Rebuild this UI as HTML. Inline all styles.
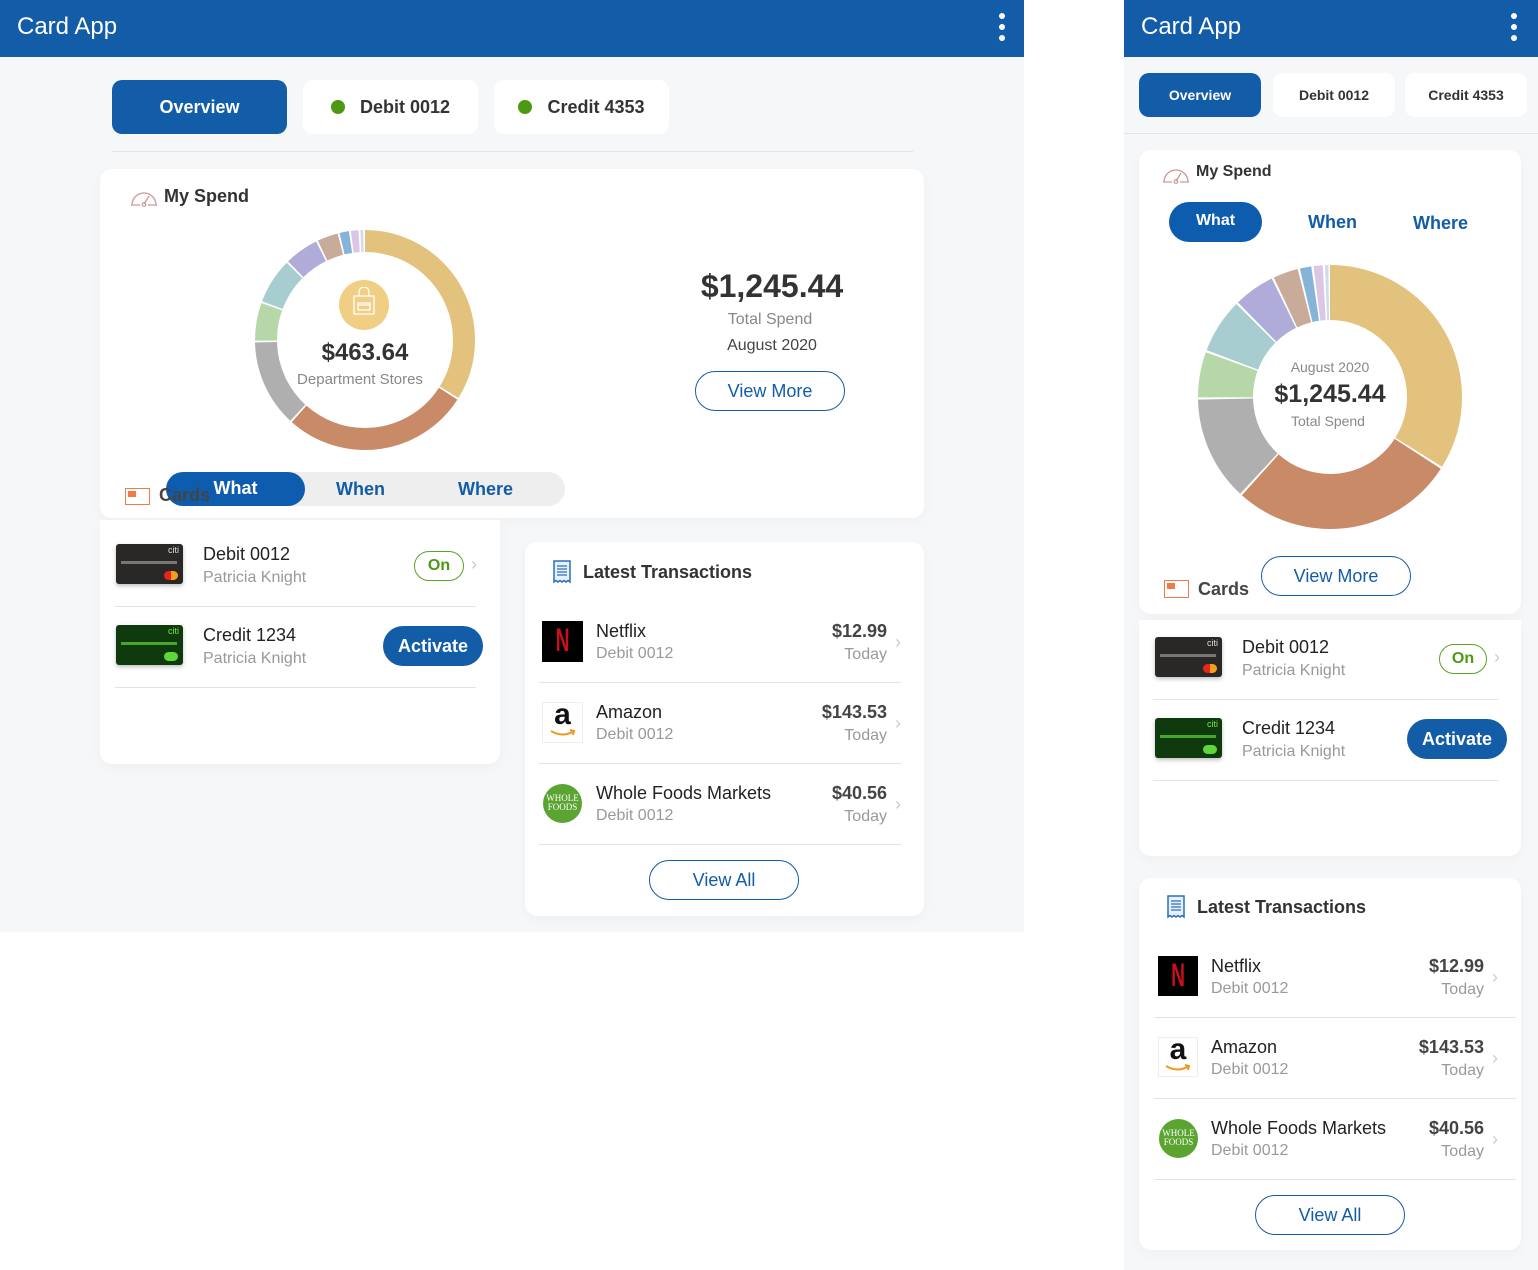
<!DOCTYPE html>
<html><head><meta charset="utf-8"><style>
*{box-sizing:border-box;margin:0;padding:0}
body{width:1538px;height:1270px;position:relative;background:#fff;font-family:"Liberation Sans",Arial,sans-serif;overflow:hidden;color:#222}
.a{position:absolute}
.hdr{background:#125ca8;height:57px;color:#fff}
.hdr .t{position:absolute;left:17px;top:13px;font-size:24px}
.dots{position:absolute;top:13px;width:6px}
.dots i{display:block;width:6px;height:6px;border-radius:50%;background:#fff;margin-bottom:5px}
.card{background:#fff;border-radius:12px;box-shadow:0 4px 12px rgba(0,0,0,.03)}
.tab{background:#fff;border-radius:10px;font-weight:bold;color:#333;display:flex;align-items:center;justify-content:center}
.tab.on{background:#125ca8;color:#fff}
.gd{width:14px;height:14px;border-radius:50%;background:#4c9a13;margin-right:15px}
.btn{border:1.5px solid #125ca8;border-radius:22px;color:#125ca8;font-size:18px;display:flex;align-items:center;justify-content:center;background:#fff}
.bl{color:#125ca8;font-weight:bold;font-size:18px}
.cc{width:67px;height:40px;border-radius:3px;box-shadow:0 2px 4px rgba(0,0,0,.25);background:#2a2827;overflow:hidden}
.cc.g{background:#0f3a0d}
.cc b{position:absolute;right:4px;top:1px;color:#ddd;font-size:9px;font-weight:normal}
.cc.g b{color:#7be34b}
.cc s{position:absolute;left:5px;top:17px;width:56px;height:3px;background:#999;opacity:.7}
.cc.g s{background:#5fd63a}
.cc u{position:absolute;right:5px;bottom:4px;width:14px;height:9px;border-radius:5px;background:linear-gradient(90deg,#e8241c 50%,#f59e1a 50%)}
.cc.g u{background:#5fd63a}
.nm{font-size:18px;color:#222}
.sub{font-size:16px;color:#999}
.onp{border:1.5px solid #5aa321;border-radius:16px;color:#4c9a13;font-weight:bold;font-size:16px;display:flex;align-items:center;justify-content:center}
.act{background:#125ca8;border-radius:20px;color:#fff;font-size:18px;font-weight:bold;display:flex;align-items:center;justify-content:center}
.chev{color:#ccc;font-size:18px}
.line{height:1px;background:#e3e3e3}
.amt{font-size:18px;font-weight:bold;color:#444;text-align:right}
.day{font-size:16px;color:#999;text-align:right}
.h{font-size:18px;font-weight:bold;color:#333}
.nf{font-family:"Liberation Sans Narrow","Liberation Sans",sans-serif;transform:scaleX(.6)}
</style></head><body>

<!-- LEFT PANEL -->
<div class="a" style="left:0;top:0;width:1024px;height:932px;background:#f6f7f9"></div>
<div class="a hdr" style="left:0;top:0;width:1024px"><span class="t">Card App</span><div class="dots" style="left:999px"><i></i><i></i><i></i></div></div>

<div class="a tab on" style="left:112px;top:80px;width:175px;height:54px;font-size:18px">Overview</div>
<div class="a tab" style="left:303px;top:80px;width:175px;height:54px;font-size:18px"><span class="gd"></span>Debit 0012</div>
<div class="a tab" style="left:494px;top:80px;width:175px;height:54px;font-size:18px"><span class="gd"></span>Credit 4353</div>
<div class="a line" style="left:112px;top:151px;width:801px"></div>

<div class="a card" style="left:100px;top:169px;width:824px;height:349px"></div>
<svg class="a" style="left:130px;top:186px" width="28" height="22" viewBox="0 0 28 22"><path d="M2 19 A12 12 0 0 1 26 19 M1 19h9 M18 19h9 M14 18 L19 10" fill="none" stroke="#c99" stroke-width="1.3"/><circle cx="14" cy="18.5" r="1.8" fill="none" stroke="#c99" stroke-width="1.2"/></svg>
<div class="a h" style="left:164px;top:186px">My Spend</div>

<svg class="a" style="left:255px;top:230px" width="220" height="220" viewBox="0 0 220 220">
<g transform="rotate(-90 110 110)" fill="none" stroke-width="22">
<circle cx="110" cy="110" r="99" pathLength="360" stroke="#e2c27d" stroke-dasharray="122 360" stroke-dashoffset="0"/>
<circle cx="110" cy="110" r="99" pathLength="360" stroke="#c98a68" stroke-dasharray="99 360" stroke-dashoffset="-123"/>
<circle cx="110" cy="110" r="99" pathLength="360" stroke="#afafaf" stroke-dasharray="46 360" stroke-dashoffset="-223"/>
<circle cx="110" cy="110" r="99" pathLength="360" stroke="#b6d8a8" stroke-dasharray="20 360" stroke-dashoffset="-270"/>
<circle cx="110" cy="110" r="99" pathLength="360" stroke="#a7cdd0" stroke-dasharray="24 360" stroke-dashoffset="-291"/>
<circle cx="110" cy="110" r="99" pathLength="360" stroke="#afacda" stroke-dasharray="18 360" stroke-dashoffset="-316"/>
<circle cx="110" cy="110" r="99" pathLength="360" stroke="#c8ab99" stroke-dasharray="11 360" stroke-dashoffset="-335"/>
<circle cx="110" cy="110" r="99" pathLength="360" stroke="#85b4d8" stroke-dasharray="5 360" stroke-dashoffset="-347"/>
<circle cx="110" cy="110" r="99" pathLength="360" stroke="#dcc6e6" stroke-dasharray="4 360" stroke-dashoffset="-353"/>
<circle cx="110" cy="110" r="99" pathLength="360" stroke="#cfdcef" stroke-dasharray="1.5 360" stroke-dashoffset="-358"/>
</g></svg>
<div class="a" style="left:339px;top:280px;width:50px;height:50px;border-radius:50%;background:#f0cf84"></div>
<svg class="a" style="left:351px;top:287px" width="26" height="30" viewBox="0 0 26 30"><path d="M3 9h20v18H3z M8 9V5a5 5 0 0 1 10 0v4 M7 16h12v7H7z M7 18h12" fill="none" stroke="#fff" stroke-width="1.3"/></svg>
<div class="a" style="left:260px;top:339px;width:210px;text-align:center;font-size:24px;font-weight:bold;color:#333">$463.64</div>
<div class="a" style="left:260px;top:371px;width:200px;text-align:center;font-size:15px;color:#888">Department Stores</div>

<div class="a" style="left:672px;top:268px;width:200px;text-align:center;font-size:32px;font-weight:bold;color:#333">$1,245.44</div>
<div class="a" style="left:670px;top:311px;width:200px;text-align:center;font-size:16px;color:#888">Total Spend</div>
<div class="a" style="left:672px;top:337px;width:200px;text-align:center;font-size:16px;color:#444">August 2020</div>
<div class="a btn" style="left:695px;top:371px;width:150px;height:40px">View More</div>

<div class="a" style="left:125px;top:488px;width:25px;height:17px;border:1px solid #f07a4a"></div>
<div class="a" style="left:128px;top:491px;width:8px;height:6px;background:#f07a4a"></div>
<div class="a" style="left:166px;top:472px;width:399px;height:34px;border-radius:17px;background:#eeeeee"></div>
<div class="a" style="left:166px;top:472px;width:139px;height:34px;border-radius:17px;background:#0d5cad"></div>
<div class="a" style="left:166px;top:478px;width:139px;text-align:center;font-size:18px;font-weight:bold;color:#fff">What</div>
<div class="a" style="left:159px;top:485px;font-size:18px;font-weight:bold;color:#444">Cards</div>
<div class="a bl" style="left:336px;top:479px">When</div>
<div class="a bl" style="left:458px;top:479px">Where</div>

<div class="a card" style="left:100px;top:520px;width:400px;height:244px;border-radius:0 0 12px 12px"></div>
<div class="a cc" style="left:116px;top:544px"><b>citi</b><s></s><u></u></div>
<div class="a nm" style="left:203px;top:544px">Debit 0012</div>
<div class="a sub" style="left:203px;top:569px">Patricia Knight</div>
<div class="a onp" style="left:414px;top:551px;width:50px;height:30px">On</div>
<div class="a chev" style="left:471px;top:554px">›</div>
<div class="a line" style="left:115px;top:606px;width:361px"></div>
<div class="a cc g" style="left:116px;top:625px"><b>citi</b><s></s><u></u></div>
<div class="a nm" style="left:203px;top:625px">Credit 1234</div>
<div class="a sub" style="left:203px;top:650px">Patricia Knight</div>
<div class="a act" style="left:383px;top:626px;width:100px;height:40px">Activate</div>
<div class="a line" style="left:115px;top:687px;width:361px"></div>

<div class="a card" style="left:525px;top:542px;width:399px;height:374px"></div>
<svg class="a" style="left:553px;top:560px" width="18" height="24" viewBox="0 0 18 24"><path d="M1 1h16v21l-2-1.5-2 1.5-2-1.5-2 1.5-2-1.5-2 1.5-2-1.5-2 1.5z" fill="#e8f0fa" stroke="#2a6fc0" stroke-width="1.5"/><path d="M4 6h10M4 9h10M4 12h10M4 15h10" stroke="#2a6fc0" stroke-width="1.2"/></svg>
<div class="a h" style="left:583px;top:562px">Latest Transactions</div>

<div class="a" style="left:542px;top:621px;width:41px;height:41px;background:#000"></div>
<div class="a nf" style="left:542px;top:622px;width:41px;text-align:center;font-size:32px;font-weight:bold;color:#c8101a">N</div>
<div class="a nm" style="left:596px;top:621px">Netflix</div>
<div class="a sub" style="left:596px;top:645px">Debit 0012</div>
<div class="a amt" style="left:787px;top:621px;width:100px">$12.99</div>
<div class="a day" style="left:787px;top:646px;width:100px">Today</div>
<div class="a chev" style="left:895px;top:632px">›</div>
<div class="a line" style="left:539px;top:682px;width:362px"></div>

<div class="a" style="left:542px;top:702px;width:41px;height:41px;border:1px solid #eee;background:#fff"></div>
<div class="a" style="left:542px;top:698px;width:41px;text-align:center;font-size:30px;font-weight:bold;color:#111">a</div>
<svg class="a" style="left:549px;top:729px" width="28" height="9"><path d="M2 2 Q14 9 25 2 M21 1l4 1-1 4" fill="none" stroke="#f29a1f" stroke-width="2"/></svg>
<div class="a nm" style="left:596px;top:702px">Amazon</div>
<div class="a sub" style="left:596px;top:726px">Debit 0012</div>
<div class="a amt" style="left:787px;top:702px;width:100px">$143.53</div>
<div class="a day" style="left:787px;top:727px;width:100px">Today</div>
<div class="a chev" style="left:895px;top:713px">›</div>
<div class="a line" style="left:539px;top:763px;width:362px"></div>

<div class="a" style="left:543px;top:784px;width:39px;height:39px;border-radius:50%;background:#5ba432;color:#fff;font-family:'Liberation Serif',serif;font-size:9px;line-height:9px;text-align:center;padding-top:10px">WHOLE<br>FOODS</div>
<div class="a nm" style="left:596px;top:783px">Whole Foods Markets</div>
<div class="a sub" style="left:596px;top:807px">Debit 0012</div>
<div class="a amt" style="left:787px;top:783px;width:100px">$40.56</div>
<div class="a day" style="left:787px;top:808px;width:100px">Today</div>
<div class="a chev" style="left:895px;top:794px">›</div>
<div class="a line" style="left:539px;top:844px;width:362px"></div>
<div class="a btn" style="left:649px;top:860px;width:150px;height:40px">View All</div>

<!-- RIGHT PANEL -->
<div class="a" style="left:1124px;top:0;width:414px;height:1270px;background:#f6f7f9"></div>
<div class="a hdr" style="left:1124px;top:0;width:414px"><span class="t">Card App</span><div class="dots" style="left:387px"><i></i><i></i><i></i></div></div>
<div class="a tab on" style="left:1139px;top:73px;width:122px;height:44px;font-size:14px">Overview</div>
<div class="a tab" style="left:1273px;top:73px;width:122px;height:44px;font-size:14px">Debit 0012</div>
<div class="a tab" style="left:1405px;top:73px;width:122px;height:44px;font-size:14px">Credit 4353</div>
<div class="a line" style="left:1124px;top:133px;width:414px"></div>

<div class="a card" style="left:1139px;top:150px;width:382px;height:464px"></div>
<svg class="a" style="left:1162px;top:163px" width="28" height="22" viewBox="0 0 28 22"><path d="M2 19 A12 12 0 0 1 26 19 M1 19h9 M18 19h9 M14 18 L19 10" fill="none" stroke="#c99" stroke-width="1.3"/><circle cx="14" cy="18.5" r="1.8" fill="none" stroke="#c99" stroke-width="1.2"/></svg>
<div class="a" style="left:1196px;top:163px;font-size:16px;font-weight:bold;color:#333">My Spend</div>
<div class="a" style="left:1169px;top:202px;width:93px;height:40px;border-radius:20px;background:#0d5cad"></div>
<div class="a" style="left:1169px;top:212px;width:93px;text-align:center;font-size:16px;font-weight:bold;color:#fff">What</div>
<div class="a bl" style="left:1308px;top:212px">When</div>
<div class="a bl" style="left:1413px;top:213px">Where</div>

<svg class="a" style="left:1198px;top:265px" width="264" height="264" viewBox="0 0 264 264">
<g transform="rotate(-90 132 132)" fill="none" stroke-width="55">
<circle cx="132" cy="132" r="104.5" pathLength="360" stroke="#e2c27d" stroke-dasharray="122 360" stroke-dashoffset="0"/>
<circle cx="132" cy="132" r="104.5" pathLength="360" stroke="#c98a68" stroke-dasharray="99 360" stroke-dashoffset="-123"/>
<circle cx="132" cy="132" r="104.5" pathLength="360" stroke="#afafaf" stroke-dasharray="46 360" stroke-dashoffset="-223"/>
<circle cx="132" cy="132" r="104.5" pathLength="360" stroke="#b6d8a8" stroke-dasharray="20 360" stroke-dashoffset="-270"/>
<circle cx="132" cy="132" r="104.5" pathLength="360" stroke="#a7cdd0" stroke-dasharray="24 360" stroke-dashoffset="-291"/>
<circle cx="132" cy="132" r="104.5" pathLength="360" stroke="#afacda" stroke-dasharray="18 360" stroke-dashoffset="-316"/>
<circle cx="132" cy="132" r="104.5" pathLength="360" stroke="#c8ab99" stroke-dasharray="11 360" stroke-dashoffset="-335"/>
<circle cx="132" cy="132" r="104.5" pathLength="360" stroke="#85b4d8" stroke-dasharray="5 360" stroke-dashoffset="-347"/>
<circle cx="132" cy="132" r="104.5" pathLength="360" stroke="#dcc6e6" stroke-dasharray="4 360" stroke-dashoffset="-353"/>
<circle cx="132" cy="132" r="104.5" pathLength="360" stroke="#cfdcef" stroke-dasharray="1.5 360" stroke-dashoffset="-358"/>
</g></svg>
<div class="a" style="left:1230px;top:359px;width:200px;text-align:center;font-size:14px;color:#888">August 2020</div>
<div class="a" style="left:1230px;top:380px;width:200px;text-align:center;font-size:25px;font-weight:bold;color:#333">$1,245.44</div>
<div class="a" style="left:1228px;top:413px;width:200px;text-align:center;font-size:14px;color:#888">Total Spend</div>

<div class="a" style="left:1164px;top:580px;width:25px;height:18px;border:1px solid #f07a4a"></div>
<div class="a" style="left:1167px;top:583px;width:8px;height:6px;background:#f07a4a"></div>
<div class="a" style="left:1198px;top:579px;font-size:18px;font-weight:bold;color:#444">Cards</div>
<div class="a btn" style="left:1261px;top:556px;width:150px;height:40px">View More</div>

<div class="a card" style="left:1139px;top:620px;width:382px;height:236px;border-radius:0 0 12px 12px"></div>
<div class="a cc" style="left:1155px;top:637px"><b>citi</b><s></s><u></u></div>
<div class="a nm" style="left:1242px;top:637px">Debit 0012</div>
<div class="a sub" style="left:1242px;top:662px">Patricia Knight</div>
<div class="a onp" style="left:1439px;top:644px;width:48px;height:30px">On</div>
<div class="a chev" style="left:1494px;top:647px">›</div>
<div class="a line" style="left:1153px;top:699px;width:345px"></div>
<div class="a cc g" style="left:1155px;top:718px"><b>citi</b><s></s><u></u></div>
<div class="a nm" style="left:1242px;top:718px">Credit 1234</div>
<div class="a sub" style="left:1242px;top:743px">Patricia Knight</div>
<div class="a act" style="left:1407px;top:719px;width:100px;height:40px">Activate</div>
<div class="a line" style="left:1153px;top:780px;width:345px"></div>

<div class="a card" style="left:1139px;top:878px;width:382px;height:372px"></div>
<svg class="a" style="left:1167px;top:895px" width="18" height="24" viewBox="0 0 18 24"><path d="M1 1h16v21l-2-1.5-2 1.5-2-1.5-2 1.5-2-1.5-2 1.5-2-1.5-2 1.5z" fill="#e8f0fa" stroke="#2a6fc0" stroke-width="1.5"/><path d="M4 6h10M4 9h10M4 12h10M4 15h10" stroke="#2a6fc0" stroke-width="1.2"/></svg>
<div class="a h" style="left:1197px;top:897px">Latest Transactions</div>

<div class="a" style="left:1158px;top:956px;width:40px;height:40px;background:#000"></div>
<div class="a nf" style="left:1158px;top:957px;width:40px;text-align:center;font-size:32px;font-weight:bold;color:#c8101a">N</div>
<div class="a nm" style="left:1211px;top:956px">Netflix</div>
<div class="a sub" style="left:1211px;top:980px">Debit 0012</div>
<div class="a amt" style="left:1384px;top:956px;width:100px">$12.99</div>
<div class="a day" style="left:1384px;top:981px;width:100px">Today</div>
<div class="a chev" style="left:1492px;top:967px">›</div>
<div class="a line" style="left:1154px;top:1017px;width:362px"></div>

<div class="a" style="left:1158px;top:1037px;width:40px;height:40px;border:1px solid #eee;background:#fff"></div>
<div class="a" style="left:1158px;top:1033px;width:40px;text-align:center;font-size:30px;font-weight:bold;color:#111">a</div>
<svg class="a" style="left:1164px;top:1064px" width="28" height="9"><path d="M2 2 Q14 9 25 2 M21 1l4 1-1 4" fill="none" stroke="#f29a1f" stroke-width="2"/></svg>
<div class="a nm" style="left:1211px;top:1037px">Amazon</div>
<div class="a sub" style="left:1211px;top:1061px">Debit 0012</div>
<div class="a amt" style="left:1384px;top:1037px;width:100px">$143.53</div>
<div class="a day" style="left:1384px;top:1062px;width:100px">Today</div>
<div class="a chev" style="left:1492px;top:1048px">›</div>
<div class="a line" style="left:1154px;top:1098px;width:362px"></div>

<div class="a" style="left:1159px;top:1119px;width:39px;height:39px;border-radius:50%;background:#5ba432;color:#fff;font-family:'Liberation Serif',serif;font-size:9px;line-height:9px;text-align:center;padding-top:10px">WHOLE<br>FOODS</div>
<div class="a nm" style="left:1211px;top:1118px">Whole Foods Markets</div>
<div class="a sub" style="left:1211px;top:1142px">Debit 0012</div>
<div class="a amt" style="left:1384px;top:1118px;width:100px">$40.56</div>
<div class="a day" style="left:1384px;top:1143px;width:100px">Today</div>
<div class="a chev" style="left:1492px;top:1129px">›</div>
<div class="a line" style="left:1154px;top:1179px;width:362px"></div>
<div class="a btn" style="left:1255px;top:1195px;width:150px;height:40px">View All</div>

</body></html>
